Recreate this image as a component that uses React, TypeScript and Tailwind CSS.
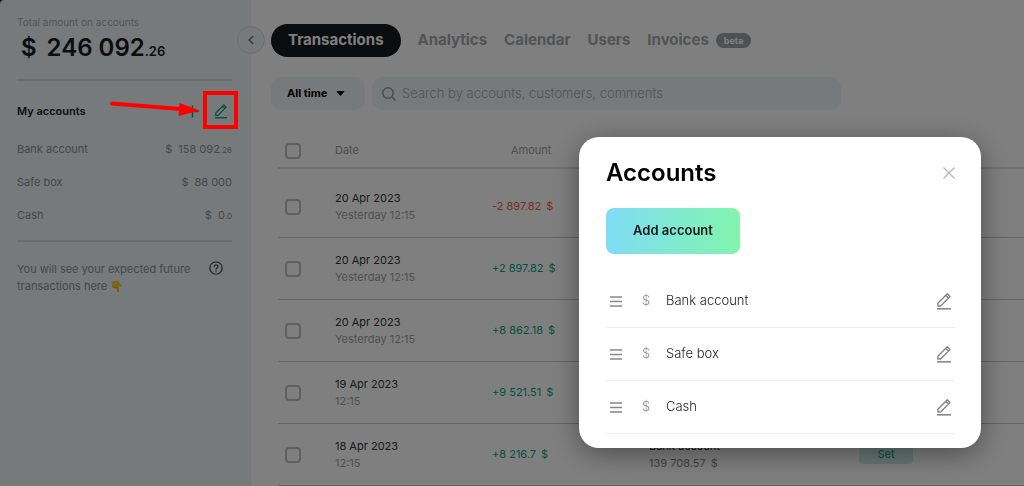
import React from "react";

type IconProps = { className?: string };

function PencilIcon({ className }: IconProps) {
  return (
    <svg viewBox="0 0 14 17" fill="none" stroke="currentColor" strokeLinejoin="round" className={className} aria-hidden="true">
      <path d="M0.9 13V10.2L10.3 0.8L13 3.4L3.6 13Z M8.9 2.4L11.4 4.9" strokeWidth="1.4" />
      <path d="M0 15.8H14" strokeWidth="1.6" />
    </svg>
  );
}

const accounts = [
  { name: "Bank account", whole: "158 092", cents: ".26" },
  { name: "Safe box", whole: "88 000", cents: "" },
  { name: "Cash", whole: "0", cents: ".0" },
];

const tabs = ["Analytics", "Calendar", "Users", "Invoices"];

type Row = { date: string; time: string; amount: string; account?: string; balance?: string };

const rows: Row[] = [
  { date: "20 Apr 2023", time: "Yesterday 12:15", amount: "-2 897.82" },
  { date: "20 Apr 2023", time: "Yesterday 12:15", amount: "+2 897.82" },
  { date: "20 Apr 2023", time: "Yesterday 12:15", amount: "+8 862.18" },
  { date: "19 Apr 2023", time: "12:15", amount: "+9 521.51" },
  { date: "18 Apr 2023", time: "12:15", amount: "+8 216.7", account: "Bank account", balance: "139 708.57" },
];

function Sidebar() {
  return (
    <aside className="relative w-[251px] shrink-0 rounded-tl bg-[#ecf5f7] pr-[19px] pl-[17px]">
      <div className="border-b-2 border-[#d3dbdd] pt-3">
        <p className="text-[10px] leading-5 text-[#a2aaac]">Total amount on accounts</p>
        <p className="flex items-baseline pb-[15px] pl-1 text-2xl font-semibold text-[#15191b]">
          <span className="mr-2.5">$</span>
          <span>246 092</span>
          <span className="text-[13px]">.26</span>
        </p>
      </div>
      <div className="flex h-[52px] items-center pt-2">
        <h2 className="flex-1 text-[11px] font-semibold text-[#15191b]">My accounts</h2>
        <button aria-label="Add account" className="mr-4 text-[#0a9c78]">
          <svg viewBox="0 0 13 13" className="size-[13px]" stroke="currentColor" strokeWidth="1.4" aria-hidden="true">
            <path d="M6.5 0.5V12.5M0.5 6.5H12.5" />
          </svg>
        </button>
        <button aria-label="Edit accounts" className="mr-[5px] text-[#0a9c78]">
          <PencilIcon className="h-[15px] w-3" />
        </button>
      </div>
      <ul className="border-b-2 border-[#d3dbdd] pb-2 text-[11px] text-[#8a9193]">
        {accounts.map((a) => (
          <li key={a.name} className="flex h-[33px] items-center justify-between">
            <span>{a.name}</span>
            <span className="flex items-baseline">
              <span className="mr-1.5">$</span>
              {a.whole}
              <span className="text-[8px]">{a.cents}</span>
            </span>
          </li>
        ))}
      </ul>
      <div className="flex items-start justify-between pt-[19px] pr-[9px]">
        <p className="text-[11px] leading-[17px] text-[#8a9193]">
          You will see your expected future
          <br />
          transactions here 👇
        </p>
        <svg viewBox="0 0 14 14" fill="none" stroke="#4c5254" className="size-3.5 shrink-0" aria-hidden="true">
          <circle cx="7" cy="7" r="6.2" strokeWidth="1.3" />
          <path d="M5.2 5.7C5.2 3.3 8.9 3.3 8.9 5.6C8.9 7 7 6.9 7 8.4M7 9.4V10.7" strokeWidth="1.3" />
        </svg>
      </div>
      <button
        aria-label="Collapse sidebar"
        className="absolute top-[26px] -right-3.5 flex size-7 items-center justify-center rounded-full border border-[#cfdadc] bg-[#ecf5f7] text-[#6d7476]"
      >
        <svg viewBox="0 0 6 10" fill="none" stroke="currentColor" strokeWidth="1.5" className="h-2.5 w-1.5" aria-hidden="true">
          <path d="M5.2 1L1.2 5L5.2 9" />
        </svg>
      </button>
    </aside>
  );
}

function Checkbox({ label }: { label: string }) {
  return (
    <input
      type="checkbox"
      aria-label={label}
      className="ml-[7px] block size-4 appearance-none rounded border-2 border-[#bdc0c2]"
    />
  );
}

function Transactions() {
  return (
    <main className="min-w-0 flex-1 bg-white pt-6 pl-5">
      <nav className="flex items-center gap-[17px] text-[15px] font-bold text-[#a3a6a8]">
        <a href="#transactions" className="flex h-[33px] items-center rounded-full bg-[#15191d] px-[17px] text-white">
          Transactions
        </a>
        {tabs.map((t) => (
          <a key={t} href={"#" + t.toLowerCase()} className="flex items-center gap-[7px]">
            {t}
            {t === "Invoices" && (
              <span className="flex h-[15px] items-center rounded-full bg-[#9aa2a2] px-2 text-[9px] text-white">beta</span>
            )}
          </a>
        ))}
      </nav>
      <div className="mt-5 flex gap-[7px] pr-5">
        <div className="relative flex h-[33px] w-[94px] items-center rounded-[10px] bg-[#ecf5f7]">
          <select aria-label="Period" className="size-full appearance-none bg-transparent pl-4 text-[11px] font-bold text-black">
            <option>All time</option>
          </select>
          <svg viewBox="0 0 10 6" className="pointer-events-none absolute right-5 h-[5px] w-[9px]" aria-hidden="true">
            <path d="M0.8 0H9.2Q10 0 9.5 0.8L5.6 5.4Q5 6 4.4 5.4L0.5 0.8Q0 0 0.8 0Z" fill="black" />
          </svg>
        </div>
        <label className="flex h-[33px] max-w-[469px] flex-1 items-center gap-1.5 rounded-[10px] bg-[#ecf5f7] px-2.5">
          <svg viewBox="0 0 14 14" fill="none" stroke="#959b9d" strokeWidth="1.5" className="size-3.5 shrink-0" aria-hidden="true">
            <circle cx="6" cy="6" r="5.2" />
            <path d="M9.8 9.8L13.5 13.5" />
          </svg>
          <input
            type="search"
            aria-label="Search"
            placeholder="Search by accounts, customers, comments"
            className="w-full bg-transparent text-[13px] font-light outline-none placeholder:text-[#a2a8aa]"
          />
        </label>
      </div>
      <div className="mt-6 pl-[7px]">
        <table className="w-full table-fixed border-separate border-spacing-0 text-left text-[11px]">
          <colgroup>
            <col className="w-[57px]" />
            <col className="w-[157px]" />
            <col className="w-[157px]" />
            <col className="w-[210px]" />
            <col />
          </colgroup>
          <thead>
            <tr className="h-[35px] text-[#9c9fa1] *:border-b-2 *:border-[#dfe1e3] *:p-0 *:font-normal">
              <th><Checkbox label="Select all" /></th>
              <th>Date</th>
              <th className="pl-[19px]!">Amount</th>
              <td />
              <td />
            </tr>
          </thead>
          <tbody>
            {rows.map((r, i) => (
              <tr
                key={i}
                className="h-[62px] leading-[17px] *:border-b *:border-[#c6c8ca] *:p-0 first:h-[69px] first:*:pt-[7px]"
              >
                <td><Checkbox label={"Select " + r.amount} /></td>
                <td>
                  <div className="text-[#303436]">{r.date}</div>
                  <div className="text-[#9c9fa1]">{r.time}</div>
                </td>
                <td className={r.amount.startsWith("-") ? "text-[#f0603c]" : "text-[#0aa07a]"}>
                  {r.amount}
                  <span className="ml-[5px]">$</span>
                </td>
                <td>
                  {r.account && (
                    <>
                      <div className="text-[#303436]">{r.account}</div>
                      <div className="text-[#84888a]">
                        {r.balance}
                        <span className="ml-[5px]">$</span>
                      </div>
                    </>
                  )}
                </td>
                <td>
                  {r.account && (
                    <button className="block h-[18px] w-[54px] rounded bg-[#cdeee6] text-[11px] text-[#0aa07a]">Set</button>
                  )}
                </td>
              </tr>
            ))}
          </tbody>
        </table>
      </div>
    </main>
  );
}

function AccountsDialog() {
  return (
    <div className="fixed inset-0 flex items-start justify-end bg-black/50 pt-[137px] pr-[43px]">
      <div
        role="dialog"
        aria-labelledby="accounts-title"
        className="w-[402px] rounded-[20px] bg-white pt-5 pr-[26px] pb-3.5 pl-[27px] shadow-[0_6px_28px_rgba(0,0,0,0.4)]"
      >
        <div className="flex h-8 items-center justify-between">
          <h1 id="accounts-title" className="text-2xl font-semibold text-black">Accounts</h1>
          <button aria-label="Close" className="text-[#b4b4b4]">
            <svg viewBox="0 0 12 12" stroke="currentColor" strokeWidth="1.2" className="size-3" aria-hidden="true">
              <path d="M0.5 0.5L11.5 11.5M11.5 0.5L0.5 11.5" />
            </svg>
          </button>
        </div>
        <button className="mt-[19px] block h-[46px] w-[134px] rounded-lg bg-linear-to-r from-[#7fdcf3] to-[#82f4ac] text-[13px] font-semibold text-[#15191b]">
          Add account
        </button>
        <ul className="mt-[21px]">
          {accounts.map((a) => (
            <li key={a.name} className="flex h-[53px] items-center border-b border-[#ececec]">
              <svg viewBox="0 0 12 11" stroke="#868686" strokeWidth="1.6" className="ml-1 h-[11px] w-3" aria-hidden="true">
                <path d="M0 1H12M0 5.5H12M0 10H12" />
              </svg>
              <span className="ml-5 w-6 text-[13px] font-light text-[#8f8f8f]">$</span>
              <span className="flex-1 text-[13px] font-light text-[#1c1c1c]">{a.name}</span>
              <button aria-label={"Edit " + a.name} className="mr-1 text-[#868686]">
                <PencilIcon className="h-[17px] w-3.5" />
              </button>
            </li>
          ))}
        </ul>
      </div>
    </div>
  );
}

function Callout() {
  return (
    <svg viewBox="0 0 130 40" className="pointer-events-none fixed top-[90px] left-[109px] h-10 w-[130px]" fill="none" aria-hidden="true">
      <path d="M3 13.4L72 19" stroke="#ff0000" strokeWidth="4" strokeLinecap="round" />
      <path d="M70.5 13L91 20.4L69.5 26Z" fill="#ff0000" />
      <rect x="96" y="3" width="31" height="34" stroke="#ff0000" strokeWidth="4" />
    </svg>
  );
}

export default function App() {
  return (
    <div className="flex min-h-screen bg-black font-['Inter',sans-serif]">
      <Sidebar />
      <Transactions />
      <AccountsDialog />
      <Callout />
    </div>
  );
}
